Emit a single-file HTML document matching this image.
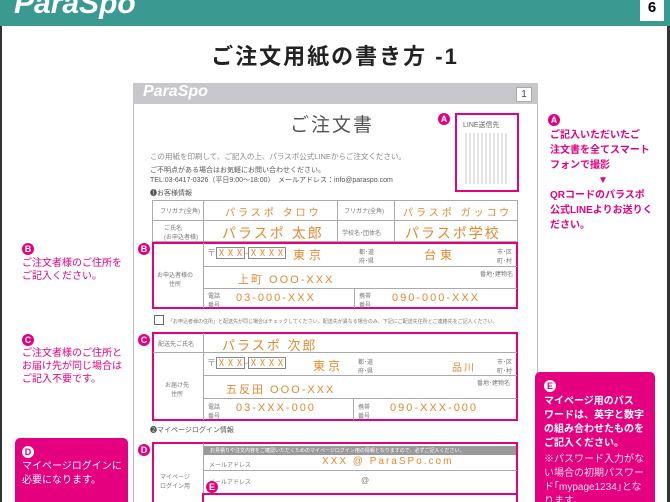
<!DOCTYPE html>
<html><head><meta charset="utf-8"><style>
*{margin:0;padding:0;box-sizing:border-box}
html,body{width:670px;height:502px;overflow:hidden}
body{background:#fff;font-family:"Liberation Sans","Noto Sans CJK JP",sans-serif;position:relative}
.a{position:absolute}
.mg{color:#e4007f;font-weight:bold}
.bd{position:absolute;width:12px;height:12px;border-radius:50%;background:#e4007f;color:#fff;font-size:9px;font-weight:bold;text-align:center;line-height:12px}
.bw{background:#fff;color:#e4007f}
.hw{position:absolute;color:#e08a30;font-size:12px;letter-spacing:2px;white-space:nowrap}
.sm{position:absolute;color:#777;font-size:6px;white-space:nowrap}
.ln{position:absolute;background:#aaa}
.pk{position:absolute;border:2px solid #e4007f}
</style></head><body>
<div class="a" style="left:0;top:0;width:670px;height:26px;background:#3a9a92"></div>
<div class="a" style="left:14px;top:-13px;color:#fff;font-size:30px;font-weight:bold;font-style:italic">ParaSpo</div>
<div class="a" style="left:640px;top:0;width:24px;height:21px;background:#fff;font-size:15px;font-weight:bold;text-align:center;line-height:16px">6</div>
<div class="a" style="left:0;top:26px;width:2px;height:476px;background:#333"></div>
<div class="a" style="left:667px;top:26px;width:3px;height:476px;background:#333"></div>
<div class="a" style="left:0;top:39px;width:670px;text-align:center;font-size:22px;font-weight:bold;color:#222;letter-spacing:2px">ご注文用紙の書き方 -1</div>

<div class="a" style="left:133px;top:83px;width:405px;height:430px;border:1px solid #bbb"></div>
<div class="a" style="left:133px;top:83px;width:405px;height:21px;background:#c8c8cc"></div>
<div class="a" style="left:143px;top:83px;color:#fff;font-size:16px;font-weight:bold;font-style:italic">ParaSpo</div>
<div class="a" style="left:516px;top:87px;width:16px;height:15px;background:#fff;border:1px solid #aaa;font-size:10px;text-align:center;line-height:13px;color:#444">1</div>
<div class="a" style="left:290px;top:110px;font-size:19px;color:#555;letter-spacing:2px">ご注文書</div>
<div class="bd" style="left:438px;top:113px">A</div>
<div class="pk" style="left:455px;top:113px;width:64px;height:79px"></div>
<div class="a" style="left:463px;top:120px;font-size:7px;color:#666">LINE送信先</div>
<div class="a" style="left:465px;top:133px;width:44px;height:51px;background:repeating-linear-gradient(90deg,#ddd 0 2px,#fff 2px 4px),#eee;opacity:.8"></div>
<div class="a" style="left:150px;top:151px;font-size:7.5px;color:#888">この用紙を印刷して、ご記入の上、パラスポ公式LINEからご注文ください。</div>
<div class="a" style="left:150px;top:165px;font-size:7px;color:#555">ご不明点がある場合はお気軽にお問い合わせください。</div>
<div class="a" style="left:150px;top:175px;font-size:7px;color:#555">TEL:03-6417-0326（平日9:00〜18:00）　メールアドレス：info@paraspo.com</div>
<div class="a" style="left:150px;top:188px;font-size:7px;color:#555">❶お客様情報</div>

<div class="a" style="left:152px;top:200px;width:366px;height:42px;border:1px solid #aaa"></div>
<div class="ln" style="left:152px;top:220px;width:366px;height:1px"></div>
<div class="ln" style="left:203px;top:200px;width:1px;height:42px"></div>
<div class="ln" style="left:337px;top:200px;width:1px;height:42px"></div>
<div class="ln" style="left:394px;top:200px;width:1px;height:42px"></div>
<div class="sm" style="left:160px;top:206px">フリガナ(全角)</div>
<div class="sm" style="left:344px;top:206px">フリガナ(全角)</div>
<div class="sm" style="left:164px;top:223px">ご氏名<br>(お申込者様)</div>
<div class="sm" style="left:342px;top:228px">学校名･団体名</div>
<div class="hw" style="left:225px;top:204px;font-size:10px;letter-spacing:3px">パラスポ タロウ</div>
<div class="hw" style="left:403px;top:204px;font-size:10px;letter-spacing:3px">パラスポ ガッコウ</div>
<div class="hw" style="left:222px;top:223px;font-size:14px;letter-spacing:2px">パラスポ 太郎</div>
<div class="hw" style="left:405px;top:223px;font-size:14px;letter-spacing:2px">パラスポ学校</div>

<div class="bd" style="left:138px;top:243px">B</div>
<div class="pk" style="left:152px;top:242px;width:366px;height:67px"></div>
<div class="ln" style="left:203px;top:243px;width:1px;height:65px"></div>
<div class="ln" style="left:203px;top:266px;width:314px;height:1px"></div>
<div class="ln" style="left:203px;top:288px;width:314px;height:1px"></div>
<div class="ln" style="left:354px;top:288px;width:1px;height:20px"></div>
<div class="sm" style="left:157px;top:270px">お申込者様の<br>　　住所</div>
<div class="hw" style="left:207px;top:246px;font-size:9px;color:#999;letter-spacing:0">〒<span style="border:1px solid #888;color:#e08a30">ⅩⅩⅩ</span>-<span style="border:1px solid #888;color:#e08a30">ⅩⅩⅩⅩ</span></div>
<div class="hw" style="left:293px;top:246px;letter-spacing:4px">東京</div>
<div class="hw" style="left:424px;top:246px;letter-spacing:4px">台東</div>
<div class="sm" style="left:359px;top:247px">都･道<br>府･県</div>
<div class="sm" style="left:497px;top:247px">市･区<br>町･村</div>
<div class="sm" style="left:480px;top:269px">番地･建物名</div>
<div class="hw" style="left:238px;top:271px;font-size:11px">上町 OOO-XXX</div>
<div class="sm" style="left:208px;top:291px">電話<br>番号</div>
<div class="sm" style="left:359px;top:291px">携帯<br>番号</div>
<div class="hw" style="left:236px;top:292px;font-size:11px">03-000-XXX</div>
<div class="hw" style="left:392px;top:292px;font-size:11px">090-000-XXX</div>

<div class="a" style="left:154px;top:315px;width:10px;height:10px;border:1px solid #666"></div>
<div class="sm" style="left:168px;top:318px;font-size:5px">「お申込者様の住所」と配送先が同じ場合はチェックしてください。配送先が異なる場合のみ、下記にご配送先住所とご連絡先をご記入ください。</div>

<div class="bd" style="left:138px;top:334px">C</div>
<div class="pk" style="left:152px;top:332px;width:366px;height:89px"></div>
<div class="ln" style="left:203px;top:333px;width:1px;height:87px"></div>
<div class="ln" style="left:153px;top:352px;width:364px;height:1px"></div>
<div class="ln" style="left:203px;top:375px;width:314px;height:1px"></div>
<div class="ln" style="left:203px;top:398px;width:314px;height:1px"></div>
<div class="ln" style="left:353px;top:398px;width:1px;height:22px"></div>
<div class="sm" style="left:158px;top:339px">配送先ご氏名</div>
<div class="sm" style="left:165px;top:380px">お届け先<br>　住所</div>
<div class="hw" style="left:222px;top:335px;font-size:13px">パラスポ 次郎</div>
<div class="hw" style="left:207px;top:356px;font-size:9px;color:#999;letter-spacing:0">〒<span style="border:1px solid #888;color:#e08a30">ⅩⅩⅩ</span>-<span style="border:1px solid #888;color:#e08a30">ⅩⅩⅩⅩ</span></div>
<div class="hw" style="left:313px;top:357px;letter-spacing:3px">東京</div>
<div class="hw" style="left:452px;top:359px;font-size:10px">品川</div>
<div class="sm" style="left:358px;top:357px">都･道<br>府･県</div>
<div class="sm" style="left:497px;top:357px">市･区<br>町･村</div>
<div class="sm" style="left:477px;top:378px">番地･建物名</div>
<div class="hw" style="left:226px;top:381px;font-size:11px">五反田 OOO-XXX</div>
<div class="sm" style="left:208px;top:402px">電話<br>番号</div>
<div class="sm" style="left:358px;top:402px">携帯<br>番号</div>
<div class="hw" style="left:236px;top:402px;font-size:11px">03-XXX-000</div>
<div class="hw" style="left:390px;top:402px;font-size:11px">090-XXX-000</div>

<div class="a" style="left:150px;top:425px;font-size:7px;color:#555">❷マイページログイン情報</div>
<div class="bd" style="left:138px;top:444px">D</div>
<div class="pk" style="left:152px;top:442px;width:366px;height:70px"></div>
<div class="a" style="left:203px;top:446px;width:313px;height:9px;background:#999"></div>
<div class="sm" style="left:210px;top:447px;color:#fff;font-size:5px">お見積りや注文内容をご確認いただくためのマイページログイン用の情報となりますので、必ずご記入ください。</div>
<div class="ln" style="left:203px;top:443px;width:1px;height:60px"></div>
<div class="ln" style="left:203px;top:470px;width:314px;height:1px"></div>
<div class="sm" style="left:209px;top:460px">メールアドレス</div>
<div class="sm" style="left:209px;top:477px">メールアドレス</div>
<div class="sm" style="left:160px;top:472px">マイページ<br>ログイン用</div>
<div class="hw" style="left:322px;top:456px;font-size:10px">XXX @ ParaSPo.com</div>
<div class="sm" style="left:361px;top:476px;font-size:8px">@</div>
<div class="bd" style="left:206px;top:481px">E</div>
<div class="pk" style="left:202px;top:493px;width:316px;height:20px"></div>

<div class="bd" style="left:22px;top:243px">B</div>
<div class="a mg" style="left:22px;top:257px;font-size:10px;line-height:13px;font-weight:normal">ご注文者様のご住所を<br>ご記入ください。</div>
<div class="bd" style="left:22px;top:334px">C</div>
<div class="a mg" style="left:22px;top:347px;font-size:10px;line-height:13px;font-weight:normal">ご注文者様のご住所と<br>お届け先が同じ場合は<br>ご記入不要です。</div>
<div class="a" style="left:15px;top:438px;width:113px;height:70px;background:#e4007f;border-radius:5px 5px 0 0"></div>
<div class="bd bw" style="left:22px;top:446px">D</div>
<div class="a" style="left:22px;top:460px;color:#fff;font-size:10px;line-height:14px">マイページログインに<br>必要になります。</div>

<div class="bd" style="left:548px;top:114px">A</div>
<div class="a mg" style="left:550px;top:128px;font-size:10px;line-height:15px">ご記入いただいたご<br>注文書を全てスマート<br>フォンで撮影<br><span style="margin-left:48px">▼</span><br>QRコードのパラスポ<br>公式LINEよりお送りく<br>ださい。</div>

<div class="a" style="left:535px;top:372px;width:120px;height:140px;background:#e4007f;border-radius:5px 5px 0 0"></div>
<div class="bd bw" style="left:544px;top:380px">E</div>
<div class="a" style="left:544px;top:395px;color:#fff;font-size:10px;line-height:14px;font-weight:bold">マイページ用のパス<br>ワードは、英字と数字<br>の組み合わせたものを<br>ご記入ください。</div>
<div class="a" style="left:544px;top:453px;color:#fde;font-size:10px;line-height:14px">※パスワード入力がな<br>い場合の初期パスワー<br>ド｢mypage1234｣とな<br>ります。</div>
</body></html>
